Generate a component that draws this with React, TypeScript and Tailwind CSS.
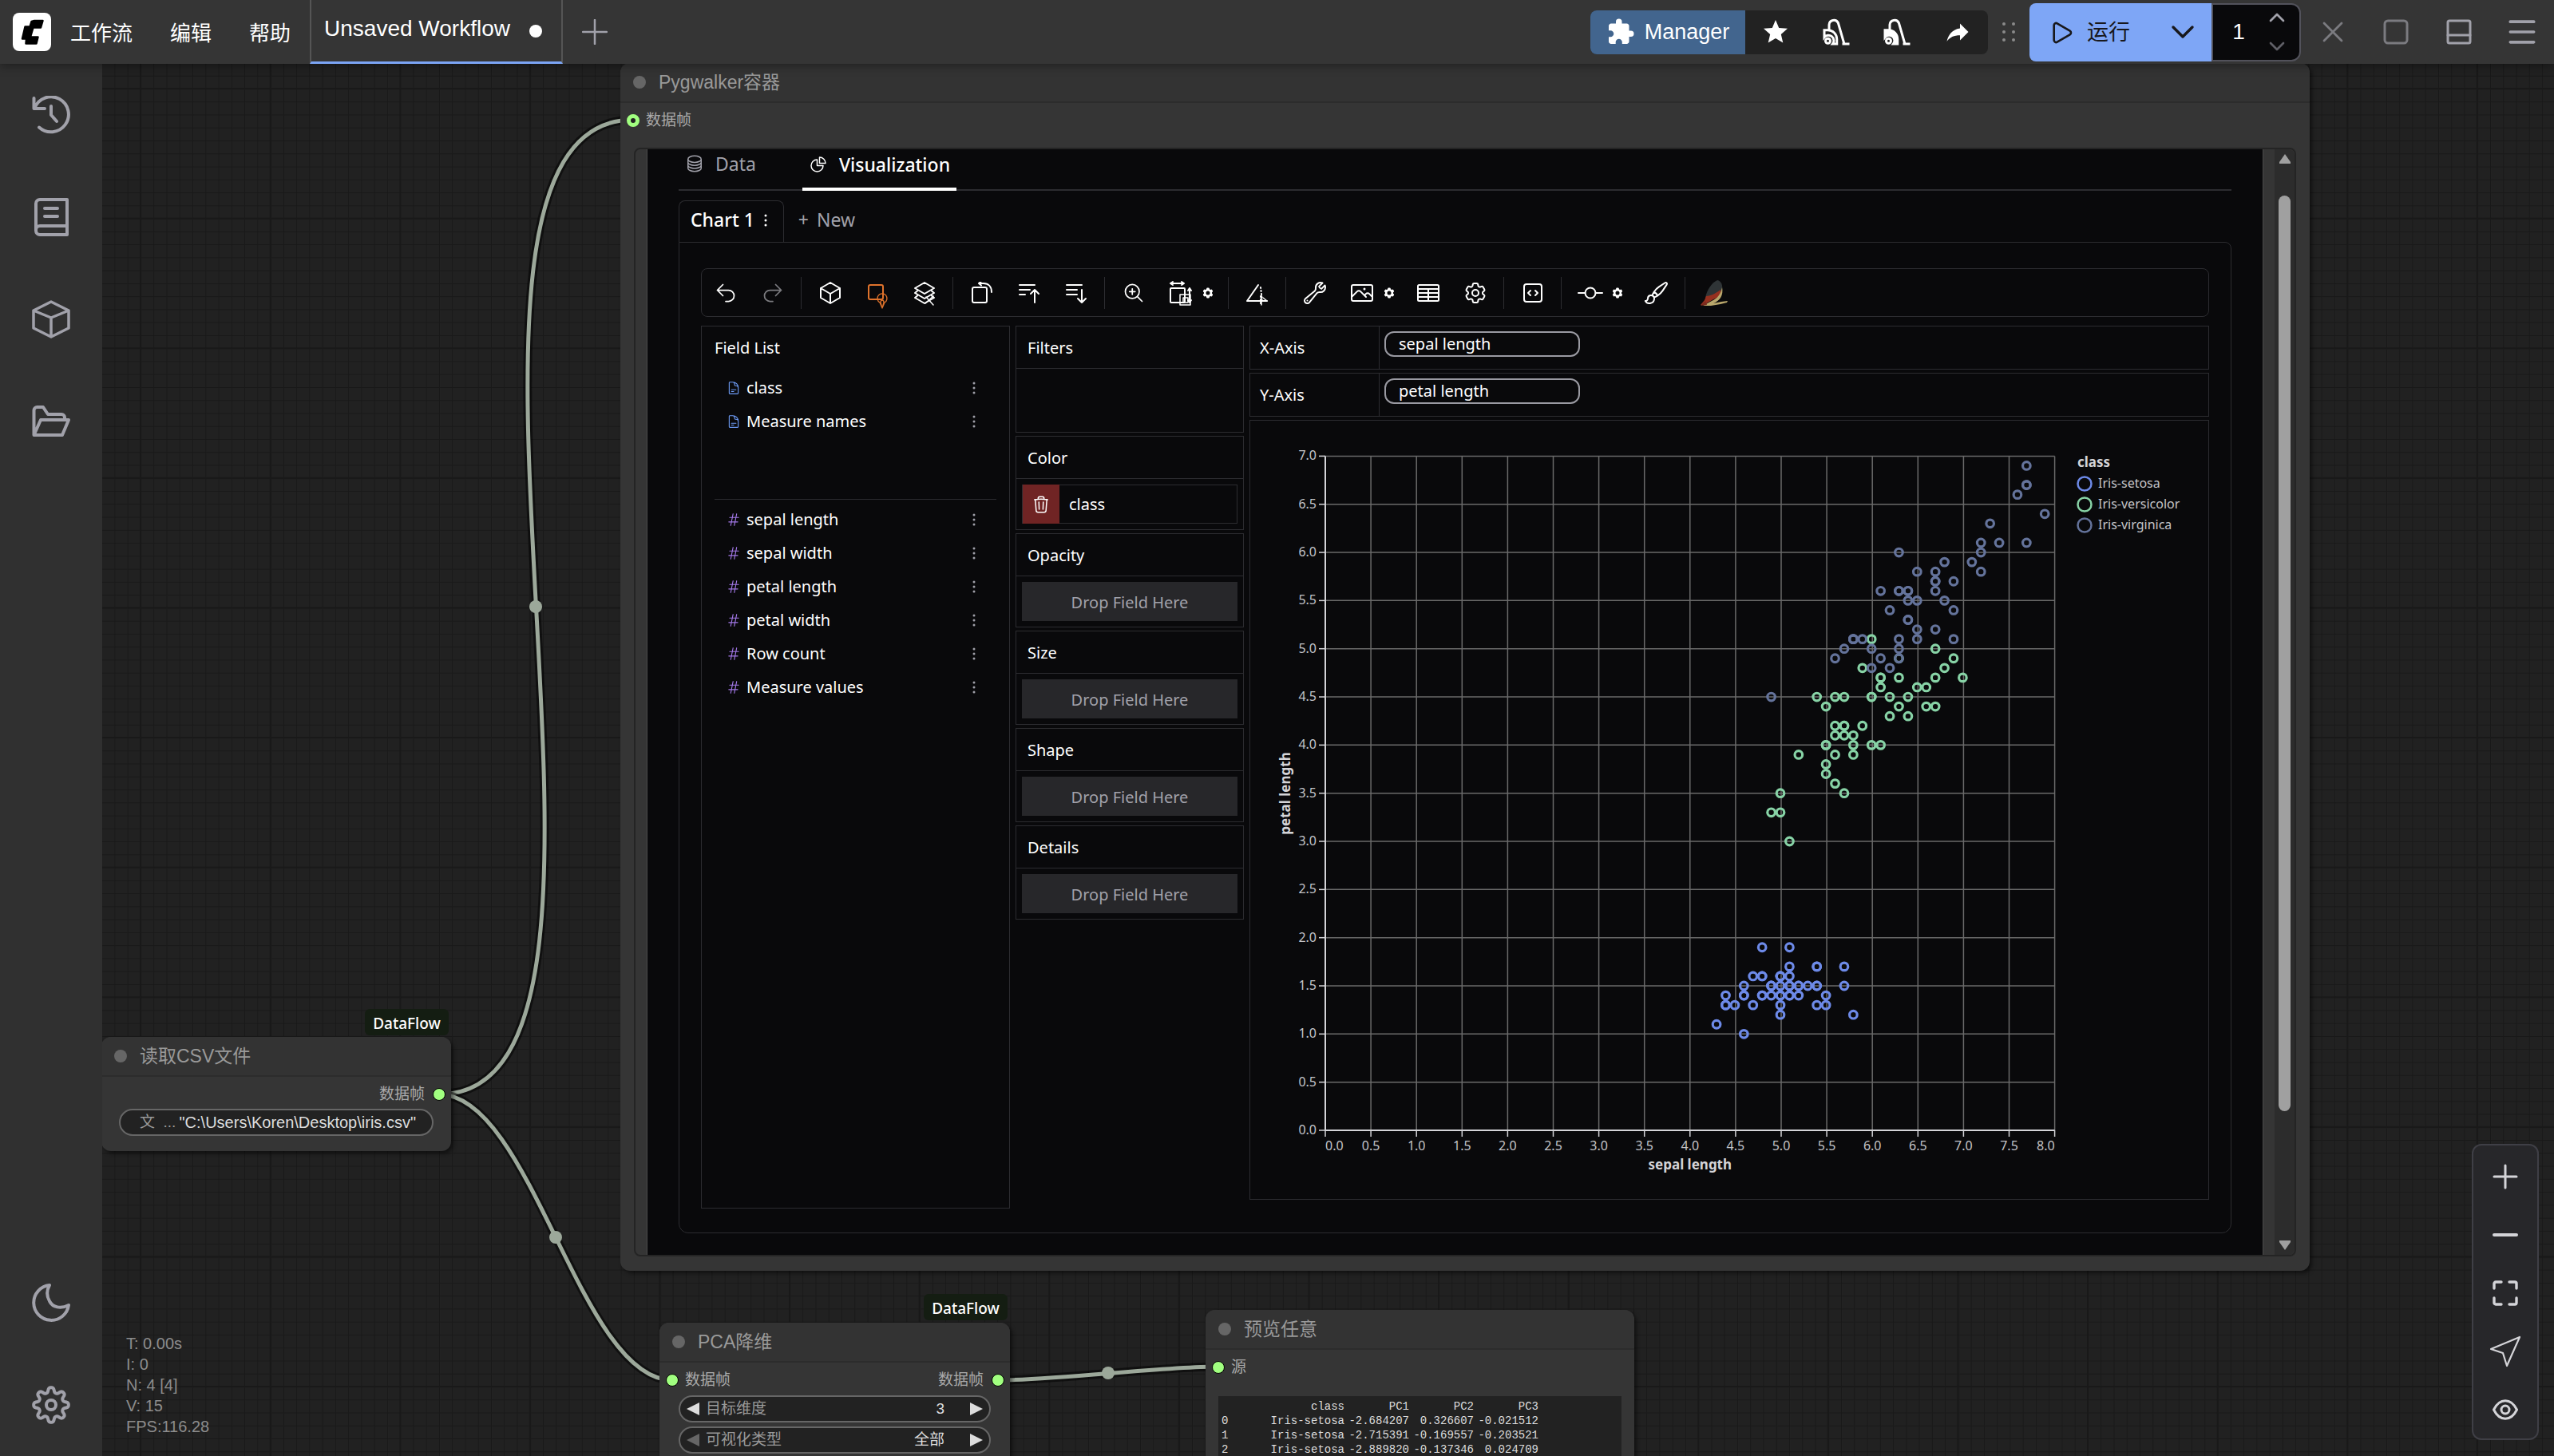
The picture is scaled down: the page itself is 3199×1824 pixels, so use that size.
import React, { ReactNode } from "react";
import {
  HiCog6Tooth,
  HiEllipsisVertical,
  HiOutlineArrowUturnLeft,
  HiOutlineArrowUturnRight,
  HiOutlineBarsArrowDown,
  HiOutlineBarsArrowUp,
  HiOutlineChartPie,
  HiOutlineCircleStack,
  HiOutlineCodeBracketSquare,
  HiOutlineCog6Tooth,
  HiOutlineCube,
  HiOutlineDocumentText,
  HiOutlineHashtag,
  HiOutlineMagnifyingGlassPlus,
  HiOutlinePaintBrush,
  HiOutlinePhoto,
  HiOutlineTableCells,
  HiOutlineTrash,
  HiOutlineWrench,
} from "react-icons/hi2";
import { MdExtension, MdStar } from "react-icons/md";
import { ChevronDown, ChevronUp, Menu, Play, X } from "lucide-react";

/* ---------------------------------------------------------------- icons */

function Stroke({ children, size = "size-12", box = 48, width = 4 }: { children: ReactNode; size?: string; box?: number; width?: number }) {
  return (
    <svg
      className={size}
      viewBox={`0 0 ${box} ${box}`}
      fill="none"
      stroke="currentColor"
      strokeWidth={width}
      strokeLinecap="round"
      strokeLinejoin="round"
      aria-hidden="true"
    >
      {children}
    </svg>
  );
}

function Logo() {
  return (
    <svg className="size-12 shrink-0" viewBox="0 0 48 48" aria-label="ComfyUI">
      <rect width="48" height="48" rx="8" fill="#fff" />
      <path
        d="M27 10H37.500L35 18.500H25.500L22 30.500H31.500L29.500 38.500H16.500L17 32.500H12L15.500 17.500H21.500L23.500 11Z"
        fill="#000"
        stroke="#000"
        strokeWidth="2.500"
        strokeLinejoin="round"
      />
    </svg>
  );
}

const gearPath = (() => {
  const pts: string[] = [];
  for (let i = 0; i < 240; i++) {
    const a = (i / 240) * Math.PI * 2;
    const r = 18.8 + 3 * Math.tanh(1.6 * Math.cos(8 * a)) / Math.tanh(1.6);
    pts.push(`${(24 + r * Math.cos(a)).toFixed(2)} ${(24 + r * Math.sin(a)).toFixed(2)}`);
  }
  return `M${pts.join("L")}Z`;
})();

const HistoryIcon = () => (
  <Stroke>
    <path d="M2.500 3V16H16M3.500 15A22 22 0 1 1 9 39.500M24 13V24L31 32" />
  </Stroke>
);
const BookIcon = () => (
  <Stroke>
    <path d="M44 2H10A5 5 0 0 0 5 7V41A5 5 0 0 0 10 46H44ZM5 40A5 5 0 0 1 10 35H44M16 13H32M16 23H32" />
  </Stroke>
);
const BoxIcon = () => (
  <Stroke width={3.5}>
    <path d="M24 2L46 13V35L24 46L2 35V13ZM2 13L24 22L46 13M24 22V46" />
  </Stroke>
);
const FolderIcon = () => (
  <Stroke>
    <path d="M2.500 41V10A4 4 0 0 1 6.500 6H14L20 15H37A4 4 0 0 1 41 19V22M2.500 41L11 22H46L38 41Z" />
  </Stroke>
);
const MoonIcon = () => (
  <Stroke>
    <path d="M22 2A22 22 0 1 0 46 27C36 32 26 30 22 22C18 15 18 9 22 2Z" />
  </Stroke>
);
const GearIcon = () => (
  <Stroke>
    <path d={gearPath} />
    <circle cx="24" cy="24" r="6" />
  </Stroke>
);

function Vacuum({ solid = false }: { solid?: boolean }) {
  return (
    <svg className="size-9" viewBox="0 0 24 24" fill="none" stroke="currentColor" strokeWidth="2" aria-hidden="true">
      <path
        d="M2 16V10.500H5A7.500 7.500 0 0 1 12.500 18V22H9A4 4 0 0 0 2 16.500Z"
        fill={solid ? "currentColor" : "none"}
      />
      <circle cx="5" cy="19.500" r="2" />
      <path d="M6 10V6A4 4 0 0 1 13.600 4.500L18.500 21.500M17 22H23" />
    </svg>
  );
}

const RotateRect = () => (
  <Stroke size="size-7" box={28} width={2}>
    <rect x="2" y="7" width="18" height="19" rx="2" />
    <path d="M10 2H16C22 2 26 6 26 13M13 -0.500L10 2L13 4.500" />
  </Stroke>
);
const ResizeRect = () => (
  <Stroke size="size-8 overflow-visible" box={32} width={2}>
    <rect x="3" y="10" width="18" height="18" rx="1" />
    <path d="M3 4H20M6 2L3 4L6 6M17 2L20 4L17 6M27 10V28M25 13L27 10L29 13M25 25L27 28L29 25" />
    <rect x="15" y="18" width="13" height="13" strokeWidth="1.500" />
    <rect x="19" y="22" width="6" height="6" strokeWidth="1.500" />
  </Stroke>
);
const CoordIcon = () => (
  <Stroke size="size-8 overflow-visible" box={32} width={2}>
    <path d="M17 6L3 26H28" />
    <path d="M20 9L22 26M20 20V32" strokeDasharray="1 3" />
    <path d="M21 19V31M23 22L28 26" strokeWidth="1.500" />
  </Stroke>
);
const MarkIcon = () => (
  <Stroke size="size-8 overflow-visible" box={32} width={2}>
    <rect x="5" y="6" width="18" height="18" rx="2" />
    <path d="M19 28A6 6 0 1 1 25 28L22 35ZM20 28L22 35L24 28M20 28C20 24 24 24 24 28" strokeWidth="1.300" />
  </Stroke>
);
const StackIcon = () => (
  <Stroke size="size-8 overflow-visible" box={32} width={2}>
    <path d="M16 3L28 10L16 17L4 10ZM7 13.500L4 16L16 23L28 16L25 13.500M7 19.500L4 22L16 29L28 22L25 19.500" />
    <path d="M17 29L27 20M18 21L27 31" strokeWidth="1.500" />
  </Stroke>
);
const LimitIcon = () => (
  <Stroke size="size-8 overflow-visible" box={32} width={2}>
    <circle cx="16" cy="16" r="6.500" />
    <path d="M1 16H9.500M22.500 16H31" />
  </Stroke>
);
const BirdIcon = () => (
  <svg className="size-9" viewBox="0 0 36 36" aria-hidden="true">
    <path d="M22 2C15 5 9 14 7 24L17 23L28 15C29 8 27 3 22 2Z" fill="#2f3436" />
    <path d="M8 22C12 22 20 19 26 14C27 19 24 24 17 26L5 33L1 33L6 27Z" fill="#96301f" />
    <path d="M28 11C30 21 25 28 17 31L27 29L35 28L34 30L26 32L14 34L4 34L15 28C22 25 26 20 28 11Z" fill="#b9a76c" />
    <path d="M1 34L7 28L9 33Z" fill="#7d2a1e" />
  </svg>
);

/* --------------------------------------------------------------- header */

function Header() {
  return (
    <header className="relative z-20 flex h-20 shrink-0 items-center bg-[#353535] pr-4 pl-4 text-white shadow-[0_2px_12px_rgba(0,0,0,0.4)]">
      <Logo />
      <nav className="ml-6 flex gap-[47px] pt-1 text-[26px]" aria-label="主菜单">
        <button className="cursor-pointer">工作流</button>
        <button className="cursor-pointer">编辑</button>
        <button className="cursor-pointer">帮助</button>
      </nav>
      <button className="ml-6 flex h-20 items-center gap-6 border-x-2 border-b-3 border-x-[#555] border-b-[#7ba4f4] px-4 pr-6 text-[28px]">
        <span className="pb-1.5">Unsaved Workflow</span>
        <span className="size-4 rounded-full bg-white" />
      </button>
      <button className="ml-6 text-[#a1a1aa]" aria-label="新建">
        <Stroke size="size-8" box={32} width={2.5}>
          <path d="M16 1V31M1 16H31" />
        </Stroke>
      </button>

      <div className="ml-auto flex items-center">
        <div className="flex h-[55px] overflow-hidden rounded-lg bg-[#222]">
          <button className="flex w-[194px] items-center justify-center gap-3 bg-[#42658e] text-[27px]">
            <MdExtension className="size-9" />
            Manager
          </button>
          <button className="flex w-[76px] items-center justify-center" aria-label="收藏">
            <MdStar className="size-9" />
          </button>
          <button className="flex w-[76px] items-center justify-center" aria-label="卸载模型">
            <Vacuum />
          </button>
          <button className="flex w-[76px] items-center justify-center" aria-label="释放缓存">
            <Vacuum solid />
          </button>
          <button className="flex w-[76px] items-center justify-center" aria-label="分享">
            <svg className="size-9" viewBox="0 0 24 24" fill="currentColor" aria-hidden="true">
              <path d="M21 12L14 5V9C7 10 4 15 3 20C5.500 16.500 9 14.900 14 14.900V19Z" />
            </svg>
          </button>
        </div>
        <div className="mx-[18px] grid grid-cols-2 gap-x-2 gap-y-1.5" aria-hidden="true">
          {[0, 1, 2, 3, 4, 5].map((i) => (
            <span key={i} className="size-1 rounded-full bg-[#8a8a8a]" />
          ))}
        </div>
        <div className="flex h-[73px]">
          <button className="flex w-[156px] items-center gap-4 rounded-l-lg bg-[#7ea6f6] pt-0.5 pl-6 text-[27px] text-[#18181b]">
            <Play className="size-8" strokeWidth={2} />
            运行
          </button>
          <button className="flex w-[72px] items-center justify-center bg-[#7ea6f6] text-[#18181b]" aria-label="运行选项">
            <ChevronDown className="size-12" strokeWidth={1.7} />
          </button>
          <div className="flex w-[112px] items-center rounded-r-xl border-2 border-[#52525b] bg-[#09090b]">
            <input
              aria-label="批次数量"
              defaultValue="1"
              className="w-16 bg-transparent text-center text-[28px] outline-none"
            />
            <div className="flex flex-col gap-1 text-[#a1a1aa]">
              <button aria-label="增加">
                <ChevronUp className="size-8" strokeWidth={2} />
              </button>
              <button aria-label="减少" className="text-[#5f5f66]">
                <ChevronDown className="size-8" strokeWidth={2} />
              </button>
            </div>
          </div>
        </div>
        <div className="ml-4 flex items-center gap-[31px] text-[#a1a1aa]">
          <button aria-label="取消" className="flex size-12 items-center justify-center text-[#7b7b80]">
            <X className="size-11" strokeWidth={1.5} />
          </button>
          <button aria-label="停止" className="flex size-12 items-center justify-center text-[#7b7b80]">
            <Stroke size="size-8" box={32} width={3}>
              <rect x="2" y="2" width="28" height="28" rx="4" />
            </Stroke>
          </button>
          <button aria-label="底部面板" className="flex size-12 items-center justify-center">
            <Stroke size="size-8" box={32} width={3}>
              <rect x="2" y="2" width="28" height="28" rx="2" />
              <path d="M2 20H30" />
            </Stroke>
          </button>
          <button aria-label="菜单" className="flex size-12 items-center justify-center">
            <Menu className="size-11" strokeWidth={2} />
          </button>
        </div>
      </div>
    </header>
  );
}

/* -------------------------------------------------------------- sidebar */

function SideButton({ label, children }: { label: string; children: ReactNode }) {
  return (
    <button aria-label={label} className="flex h-32 w-full items-center justify-center">
      {children}
    </button>
  );
}

function Sidebar() {
  return (
    <aside className="z-10 flex w-32 shrink-0 flex-col bg-[#303030] text-[#a1a1aa]">
      <SideButton label="历史">
        <HistoryIcon />
      </SideButton>
      <SideButton label="节点库">
        <BookIcon />
      </SideButton>
      <SideButton label="模型库">
        <BoxIcon />
      </SideButton>
      <SideButton label="工作流">
        <FolderIcon />
      </SideButton>
      <div className="mt-auto">
        <SideButton label="主题">
          <MoonIcon />
        </SideButton>
        <SideButton label="设置">
          <GearIcon />
        </SideButton>
      </div>
    </aside>
  );
}

/* --------------------------------------------------------- graph canvas */

const LINKS = [
  { d: "M422 1291C733 1291 354 70 665 70", x: 543, y: 680 },
  { d: "M422 1291C538 1291 598 1649 714 1649", x: 568, y: 1470 },
  { d: "M1123 1649C1192 1649 1329 1632 1397 1632", x: 1260, y: 1640 },
];

function Backdrop() {
  return (
    <svg className="absolute inset-0 size-full" aria-hidden="true">
      <defs>
        <pattern id="minor" x="48" y="31" width="16.26" height="16.26" patternUnits="userSpaceOnUse">
          <path d="M0 0H16.260M0 0V16.260" stroke="#191919" strokeWidth="2" />
        </pattern>
        <pattern id="major" x="47" y="30" width="162.6" height="162.6" patternUnits="userSpaceOnUse">
          <path d="M0 1H162.600M1 0V162.600" stroke="#191919" strokeWidth="2.500" />
        </pattern>
      </defs>
      <rect width="100%" height="100%" fill="#212121" />
      <rect width="100%" height="100%" fill="url(#minor)" />
      <rect width="100%" height="100%" fill="url(#major)" />
      {LINKS.map((l) => (
        <g key={l.d} fill="none">
          <path d={l.d} stroke="rgba(0,0,0,0.5)" strokeWidth="11" />
          <path d={l.d} stroke="#9ca89a" strokeWidth="5" />
          <circle cx={l.x} cy={l.y} r="8" fill="#9ca89a" />
        </g>
      ))}
    </svg>
  );
}

function Node({ title, place, children }: { title: string; place: string; children: ReactNode }) {
  return (
    <section className={`absolute flex flex-col rounded-xl bg-[#353535] text-[#999] shadow-[3px_3px_5px_rgba(0,0,0,0.5)] ${place}`}>
      <h2 className="flex h-[50px] shrink-0 items-center gap-4 rounded-t-xl border-b-2 border-[#2c2c2c] bg-[#333] pl-4 text-[23px]">
        <span className="size-4 rounded-full bg-[#666]" />
        {title}
      </h2>
      {children}
    </section>
  );
}

function Dot({ ring = false }: { ring?: boolean }) {
  return ring ? (
    <span className="size-4 rounded-full border-5 border-[#a1ff80] bg-[#222]" />
  ) : (
    <span className="size-4 rounded-full border border-black bg-[#a1ff80]" />
  );
}

function Slots({ input, output, ring }: { input?: string; output?: string; ring?: boolean }) {
  return (
    <div className="mt-1.5 flex h-8 shrink-0 items-center gap-2 pr-[7px] pl-2 text-[19px] text-[#aaa]">
      {input && (
        <>
          <Dot ring={ring} />
          {input}
        </>
      )}
      {output && (
        <span className="ml-auto flex items-center gap-2.5">
          {output}
          <Dot />
        </span>
      )}
    </div>
  );
}

function Badge({ place }: { place: string }) {
  return (
    <span
      className={`absolute flex h-[33px] w-[105px] items-center justify-center rounded-md bg-[#141d12] pt-1 font-['Noto_Sans'] text-[19px] font-medium text-white ${place}`}
    >
      DataFlow
    </span>
  );
}

function Combo({ label, value, first }: { label: string; value: string; first?: boolean }) {
  return (
    <div className="mx-6 flex h-[34px] items-center rounded-full border-2 border-[#666] bg-[#222] px-2 text-[19px]">
      <button aria-label={`${label} 上一个`} className={first ? "text-[#666]" : "text-[#ddd]"}>
        <svg className="size-4" viewBox="0 0 16 16" fill="currentColor">
          <path d="M16 0V16L0 8Z" />
        </svg>
      </button>
      <span className="ml-2">{label}</span>
      <span className="mr-8 ml-auto text-[#ddd]">{value}</span>
      <button aria-label={`${label} 下一个`} className="text-[#ddd]">
        <svg className="size-4" viewBox="0 0 16 16" fill="currentColor">
          <path d="M0 0V16L16 8Z" />
        </svg>
      </button>
    </div>
  );
}

const PREVIEW = [
  ["0", "Iris-setosa", "-2.684207", "0.326607", "-0.021512"],
  ["1", "Iris-setosa", "-2.715391", "-0.169557", "-0.203521"],
  ["2", "Iris-setosa", "-2.889820", "-0.137346", "0.024709"],
];

/* ---------------------------------------------------------------- chart */

const SETOSA =
  "5.1 1.4;4.9 1.4;4.7 1.3;4.6 1.5;5.0 1.4;5.4 1.7;4.6 1.4;5.0 1.5;4.4 1.4;4.9 1.5;5.4 1.5;4.8 1.6;4.8 1.4;4.3 1.1;5.8 1.2;5.7 1.5;5.4 1.3;5.1 1.4;5.7 1.7;5.1 1.5;5.4 1.7;5.1 1.5;4.6 1.0;5.1 1.7;4.8 1.9;5.0 1.6;5.0 1.6;5.2 1.5;5.2 1.4;4.7 1.6;4.8 1.6;5.4 1.5;5.2 1.5;5.5 1.4;4.9 1.5;5.0 1.2;5.5 1.3;4.9 1.5;4.4 1.3;5.1 1.5;5.0 1.3;4.5 1.3;4.4 1.3;5.0 1.6;5.1 1.9;4.8 1.4;5.1 1.6;4.6 1.4;5.3 1.5;5.0 1.4";
const VERSICOLOR =
  "7.0 4.7;6.4 4.5;6.9 4.9;5.5 4.0;6.5 4.6;5.7 4.5;6.3 4.7;4.9 3.3;6.6 4.6;5.2 3.9;5.0 3.5;5.9 4.2;6.0 4.0;6.1 4.7;5.6 3.6;6.7 4.4;5.6 4.5;5.8 4.1;6.2 4.5;5.6 3.9;5.9 4.8;6.1 4.0;6.3 4.9;6.1 4.7;6.4 4.3;6.6 4.4;6.8 4.8;6.7 5.0;6.0 4.5;5.7 3.5;5.5 3.8;5.5 3.7;5.8 3.9;6.0 5.1;5.4 4.5;6.0 4.5;6.7 4.7;6.3 4.4;5.6 4.1;5.5 4.0;5.5 4.4;6.1 4.6;5.8 4.0;5.0 3.3;5.6 4.2;5.7 4.2;5.7 4.2;6.2 4.3;5.1 3.0;5.7 4.1";
const VIRGINICA =
  "6.3 6.0;5.8 5.1;7.1 5.9;6.3 5.6;6.5 5.8;7.6 6.6;4.9 4.5;7.3 6.3;6.7 5.8;7.2 6.1;6.5 5.1;6.4 5.3;6.8 5.5;5.7 5.0;5.8 5.1;6.4 5.3;6.5 5.5;7.7 6.7;7.7 6.9;6.0 5.0;6.9 5.7;5.6 4.9;7.7 6.7;6.3 4.9;6.7 5.7;7.2 6.0;6.2 4.8;6.1 4.9;6.4 5.6;7.2 5.8;7.4 6.1;7.9 6.4;6.4 5.6;6.3 5.1;6.1 5.6;7.7 6.1;6.3 5.6;6.4 5.5;6.0 4.8;6.9 5.4;6.7 5.6;6.9 5.1;5.8 5.1;6.8 5.9;6.7 5.7;6.7 5.2;6.3 5.0;6.5 5.2;6.2 5.4;5.9 5.1";

const SERIES = [
  { name: "Iris-setosa", color: "#6d8ae8", data: SETOSA },
  { name: "Iris-versicolor", color: "#87d3a6", data: VERSICOLOR },
  { name: "Iris-virginica", color: "#64739b", data: VIRGINICA },
];

const X0 = 94;
const Y0 = 889;
const sx = (v: number) => X0 + v * 114.2;
const sy = (v: number) => Y0 - v * 120.66;
const X_TICKS = Array.from({ length: 17 }, (_, i) => i / 2);
const Y_TICKS = Array.from({ length: 15 }, (_, i) => i / 2);

function Chart() {
  return (
    <svg className="block h-[975px] w-full font-['Noto_Sans'] text-[16px]" role="img" aria-label="sepal length / petal length">
      <g stroke="#6a6a6a" strokeWidth="1.500">
        {X_TICKS.slice(1).map((t) => (
          <line key={t} x1={sx(t)} x2={sx(t)} y1={sy(7)} y2={Y0} />
        ))}
        {Y_TICKS.slice(1).map((t) => (
          <line key={t} x1={X0} x2={sx(8)} y1={sy(t)} y2={sy(t)} />
        ))}
      </g>
      <g stroke="#d4d4d8" strokeWidth="1.500">
        {X_TICKS.map((t) => (
          <line key={t} x1={sx(t)} x2={sx(t)} y1={Y0} y2={Y0 + 8} />
        ))}
        {Y_TICKS.map((t) => (
          <line key={t} x1={X0 - 8} x2={X0} y1={sy(t)} y2={sy(t)} />
        ))}
        <path d={`M${X0} ${sy(7)}V${Y0}H${sx(8)}`} fill="none" strokeWidth="2" />
      </g>
      <g fill="#c4c4c8">
        {X_TICKS.map((t) => (
          <text key={t} x={sx(t)} y={Y0 + 25} textAnchor={t === 0 ? "start" : t === 8 ? "end" : "middle"}>
            {t.toFixed(1)}
          </text>
        ))}
        {Y_TICKS.map((t) => (
          <text key={t} x={X0 - 11} y={sy(t) + 5} textAnchor="end">
            {t.toFixed(1)}
          </text>
        ))}
      </g>
      <g fill="#d4d4d8" fontWeight="700" fontSize="17">
        <text x={sx(4)} y={938} textAnchor="middle">
          sepal length
        </text>
        <text transform="translate(50 467) rotate(-90)" textAnchor="middle">
          petal length
        </text>
        <text x="1036" y="58">
          class
        </text>
      </g>
      {SERIES.map((s, i) => (
        <g key={s.name}>
          <g fill="none" stroke={s.color} strokeWidth="3.200">
            {s.data.split(";").map((p, k) => {
              const [x, y] = p.split(" ").map(Number);
              return <circle key={k} cx={sx(x) - 1} cy={sy(y)} r="4.800" />;
            })}
            <circle cx="1045" cy={79 + i * 26} r="8.500" strokeWidth="2.500" />
          </g>
          <text x="1062" y={84 + i * 26} fill="#c4c4c8">
            {s.name}
          </text>
        </g>
      ))}
    </svg>
  );
}

/* ------------------------------------------------------------ pygwalker */

const Tool = ({ label, children, tone = "" }: { label: string; children: ReactNode; tone?: string }) => (
  <button aria-label={label} className={`flex h-12 w-[49px] shrink-0 items-center justify-center ${tone}`}>
    {children}
  </button>
);
const ToolWithMenu = ({ label, children }: { label: string; children: ReactNode }) => (
  <div className="mr-1 flex items-center">
    <Tool label={label}>{children}</Tool>
    <button aria-label={`${label} settings`} className="w-5">
      <HiCog6Tooth className="mx-auto size-4" />
    </button>
  </div>
);
const Sep = () => <span className="mx-px h-10 w-px shrink-0 bg-[#2c2c30]" />;

function Toolbar() {
  return (
    <div className="flex h-[61px] items-center gap-2.5 rounded-lg border border-[#2c2c30] px-[5px]">
      <Tool label="Undo">
        <HiOutlineArrowUturnLeft className="size-7" />
      </Tool>
      <Tool label="Redo" tone="text-[#7c7c80]">
        <HiOutlineArrowUturnRight className="size-7" />
      </Tool>
      <Sep />
      <Tool label="Aggregation">
        <HiOutlineCube className="size-8" />
      </Tool>
      <Tool label="Mark type" tone="text-[#e0732c]">
        <MarkIcon />
      </Tool>
      <Tool label="Stack mode">
        <StackIcon />
      </Tool>
      <Sep />
      <Tool label="Transpose">
        <RotateRect />
      </Tool>
      <Tool label="Sort ascending">
        <HiOutlineBarsArrowUp className="size-8" />
      </Tool>
      <Tool label="Sort descending">
        <HiOutlineBarsArrowDown className="size-8" />
      </Tool>
      <Sep />
      <Tool label="Axes resize">
        <HiOutlineMagnifyingGlassPlus className="size-7" />
      </Tool>
      <ToolWithMenu label="Layout mode">
        <ResizeRect />
      </ToolWithMenu>
      <Sep />
      <Tool label="Coordinate system">
        <CoordIcon />
      </Tool>
      <Sep />
      <Tool label="Debug">
        <HiOutlineWrench className="size-8" />
      </Tool>
      <ToolWithMenu label="Export image">
        <HiOutlinePhoto className="size-8" />
      </ToolWithMenu>
      <Tool label="Export table">
        <HiOutlineTableCells className="size-8" />
      </Tool>
      <Tool label="Config">
        <HiOutlineCog6Tooth className="size-8" />
      </Tool>
      <Sep />
      <Tool label="Export code">
        <HiOutlineCodeBracketSquare className="size-8" />
      </Tool>
      <Sep />
      <ToolWithMenu label="Limit">
        <LimitIcon />
      </ToolWithMenu>
      <Tool label="Painter">
        <HiOutlinePaintBrush className="size-8" />
      </Tool>
      <Sep />
      <Tool label="Kanaries">
        <BirdIcon />
      </Tool>
    </div>
  );
}

function Field({ name, measure }: { name: string; measure?: boolean }) {
  return (
    <li className="flex h-[42px] items-center gap-[7px] pr-4 pl-[15px]">
      {measure ? (
        <HiOutlineHashtag className="size-[18px] text-[#a378e8]" />
      ) : (
        <HiOutlineDocumentText className="size-[18px] text-[#6d9bf5]" />
      )}
      {name}
      <button aria-label={`${name} menu`} className="ml-auto text-[#a1a1aa]">
        <HiEllipsisVertical className="size-6" />
      </button>
    </li>
  );
}

function Shelf({ title, children }: { title: string; children: ReactNode }) {
  return (
    <section className="border border-[#2c2c30]">
      <h3 className="flex h-[53px] items-center border-b border-[#2c2c30] pt-0.5 pl-3.5">{title}</h3>
      <div className="p-[7px]">{children}</div>
    </section>
  );
}

const Drop = () => (
  <div className="flex h-[49px] items-center justify-center bg-[#27272a] pt-0.5 text-[#a1a1aa]">Drop Field Here</div>
);

function Axis({ title, value }: { title: string; value: string }) {
  return (
    <div className="flex h-[55px] border border-[#2c2c30]">
      <div className="flex w-[162px] items-center border-r border-[#2c2c30] pl-3">{title}</div>
      <div className="p-1.5">
        <div className="flex h-8 w-[245px] items-center rounded-xl border-2 border-[#9a9aa2] pl-4">{value}</div>
      </div>
    </div>
  );
}

function Pygwalker() {
  return (
    <div className="min-w-0 flex-1 border-x border-[#4a4a4a] bg-[#09090b] px-[39px] font-['Noto_Sans'] text-[20px] text-white">
      <div className="flex h-[52px] gap-[50px] border-b-2 border-[#2c2c30]">
        <button className="flex items-center gap-3.5 px-2 pb-3.5 text-[23px] text-[#a1a1aa]">
          <HiOutlineCircleStack className="size-6" />
          Data
        </button>
        <button className="-mb-0.5 flex items-center gap-3.5 border-b-4 border-white px-2 pb-2.5 text-[23px] font-medium">
          <HiOutlineChartPie className="size-6" />
          Visualization
        </button>
      </div>
      <div className="mt-3 flex h-[52px] text-[23px]">
        <button className="flex items-center gap-0.5 rounded-t-lg border border-b-0 border-[#2c2c30] px-3.5 pb-1 font-medium">
          Chart 1
          <HiEllipsisVertical className="-mr-1 size-6" />
        </button>
        <button className="flex items-center gap-2.5 px-[18px] pb-1 text-[#a1a1aa]">
          <span aria-hidden="true">+</span>New
        </button>
      </div>
      <div className="rounded-b-xl rounded-tr-lg border border-[#2c2c30] px-[27px] pt-8 pb-[30px]">
        <Toolbar />
        <div className="mt-[11px] flex gap-[7px]">
          <section className="h-[1106px] w-[387px] shrink-0 border border-[#2c2c30] px-4">
            <h3 className="flex h-14 items-center pb-0.5">Field List</h3>
            <ul className="h-[161px] border-b border-[#2c2c30]">
              <Field name="class" />
              <Field name="Measure names" />
            </ul>
            <ul className="pt-1">
              <Field measure name="sepal length" />
              <Field measure name="sepal width" />
              <Field measure name="petal length" />
              <Field measure name="petal width" />
              <Field measure name="Row count" />
              <Field measure name="Measure values" />
            </ul>
          </section>
          <div className="flex w-[286px] shrink-0 flex-col gap-1">
            <Shelf title="Filters">
              <div className="h-[65px]" />
            </Shelf>
            <Shelf title="Color">
              <div className="flex h-[49px] items-center border border-[#2c2c30]">
                <button aria-label="Remove class" className="flex h-[49px] w-[46px] items-center justify-center bg-[#702424]">
                  <HiOutlineTrash className="size-6" />
                </button>
                <span className="pl-3">class</span>
              </div>
            </Shelf>
            <Shelf title="Opacity">
              <Drop />
            </Shelf>
            <Shelf title="Size">
              <Drop />
            </Shelf>
            <Shelf title="Shape">
              <Drop />
            </Shelf>
            <Shelf title="Details">
              <Drop />
            </Shelf>
          </div>
          <div className="flex min-w-0 flex-1 flex-col gap-1">
            <Axis title="X-Axis" value="sepal length" />
            <Axis title="Y-Axis" value="petal length" />
            <div className="border border-[#2c2c30]">
              <Chart />
            </div>
          </div>
        </div>
      </div>
    </div>
  );
}

function Scrollbar() {
  return (
    <div className="flex w-[25px] flex-col items-center justify-between rounded-r-lg bg-[#2c2c2c] py-1.5 text-[#a0a0a0]" aria-hidden="true">
      <svg className="h-3 w-4" viewBox="0 0 16 12" fill="currentColor">
        <path d="M8 0L15 10V12H1V10Z" />
      </svg>
      <div className="mt-10 mb-auto h-[1147px] w-[15px] rounded-full bg-[#a0a0a0]" />
      <svg className="h-3 w-4" viewBox="0 0 16 12" fill="currentColor">
        <path d="M8 12L15 2V0H1V2Z" />
      </svg>
    </div>
  );
}

/* ------------------------------------------------------------------ app */

function ZoomPanel() {
  const cell = "flex h-[73px] w-full items-center justify-center";
  return (
    <div className="absolute right-[19px] bottom-5 w-[84px] rounded-xl border-2 border-[#3f3f46] bg-[#27272a] pt-0.5 text-[#d4d4d8]">
      <button aria-label="放大" className={cell}>
        <Stroke size="size-8" box={32} width={3}>
          <path d="M16 2V30M2 16H30" />
        </Stroke>
      </button>
      <button aria-label="缩小" className={cell}>
        <Stroke size="size-8" box={32} width={4}>
          <path d="M2 16H30" />
        </Stroke>
      </button>
      <button aria-label="适应视图" className={cell}>
        <Stroke size="size-8" box={32} width={3.4}>
          <path d="M2 10V4A2 2 0 0 1 4 2H11M21 2H28A2 2 0 0 1 30 4V10M30 22V28A2 2 0 0 1 28 30H21M11 30H4A2 2 0 0 1 2 28V22" />
        </Stroke>
      </button>
      <button aria-label="选择模式" className={cell}>
        <Stroke size="size-10" box={40} width={2.2}>
          <path d="M38 2L22 38L17 22L2 17Z" />
        </Stroke>
      </button>
      <button aria-label="切换连线可见性" className={cell}>
        <Stroke size="size-8" box={32} width={3}>
          <path d="M1.500 16C9 1 23 1 30.500 16C23 31 9 31 1.500 16Z" />
          <circle cx="16" cy="16" r="5" />
        </Stroke>
      </button>
    </div>
  );
}

export default function App() {
  return (
    <div className="flex h-screen flex-col overflow-hidden bg-[#212121] font-['Liberation_Sans','Noto_Sans_CJK_SC',sans-serif]">
      <Header />
      <div className="flex min-h-0 flex-1">
        <Sidebar />
        <main className="relative min-w-0 flex-1 overflow-hidden">
          <Backdrop />

          <Node title="Pygwalker容器" place="-top-px left-[649px] h-[1513px] w-[2116px]">
            <Slots input="数据帧" ring />
            <div className="mx-[17px] my-[18px] flex min-h-0 flex-1 overflow-hidden rounded-lg border-2 border-[#242424] pl-3.5">
              <Pygwalker />
              <span className="w-3.5" />
              <Scrollbar />
            </div>
          </Node>

          <Badge place="left-[329px] top-[1184px]" />
          <Node title="读取CSV文件" place="-left-px top-[1219px] h-[143px] w-[438px]">
            <Slots output="数据帧" />
            <label className="mx-[22px] mt-0.5 flex h-[34px] items-center rounded-full border-2 border-[#666] bg-[#222] pr-5 pl-6 text-[19px]">
              <span className="shrink-0">文&nbsp; ...</span>
              <input
                className="min-w-0 flex-1 bg-transparent text-right text-[20px] text-[#ddd] outline-none"
                defaultValue={'"C:\\Users\\Koren\\Desktop\\iris.csv"'}
              />
            </label>
          </Node>

          <Badge place="left-[1029px] top-[1541px]" />
          <Node title="PCA降维" place="left-[698px] top-[1577px] h-[210px] w-[439px]">
            <Slots input="数据帧" output="数据帧" />
            <div className="mt-[3px] flex flex-col gap-[5px]">
              <Combo label="目标维度" value="3" />
              <Combo label="可视化类型" value="全部" first />
            </div>
          </Node>

          <Node title="预览任意" place="left-[1382px] top-[1561px] h-[260px] w-[537px]">
            <Slots input="源" />
            <div className="mx-4 mt-5 flex-1 bg-[#222] pt-1 pl-1">
              <table className="font-['Liberation_Mono',monospace] text-[14px] leading-[18px] text-[#ddd]">
                <thead>
                  <tr className="text-right">
                    <th className="w-6" />
                    <th className="w-[130px] font-normal">class</th>
                    <th className="w-[81px] font-normal">PC1</th>
                    <th className="w-[81px] font-normal">PC2</th>
                    <th className="w-[81px] font-normal">PC3</th>
                  </tr>
                </thead>
                <tbody>
                  {PREVIEW.map((row) => (
                    <tr key={row[0]} className="text-right">
                      {row.map((cell, i) => (
                        <td key={i} className={i === 0 ? "text-left" : ""}>
                          {cell}
                        </td>
                      ))}
                    </tr>
                  ))}
                </tbody>
              </table>
            </div>
          </Node>

          <div className="absolute bottom-6 left-[30px] text-[20px] leading-[26px] text-[#8c8c8c]">
            <p>T: 0.00s</p>
            <p>I: 0</p>
            <p>N: 4 [4]</p>
            <p>V: 15</p>
            <p>FPS:116.28</p>
          </div>
          <ZoomPanel />
        </main>
      </div>
    </div>
  );
}
